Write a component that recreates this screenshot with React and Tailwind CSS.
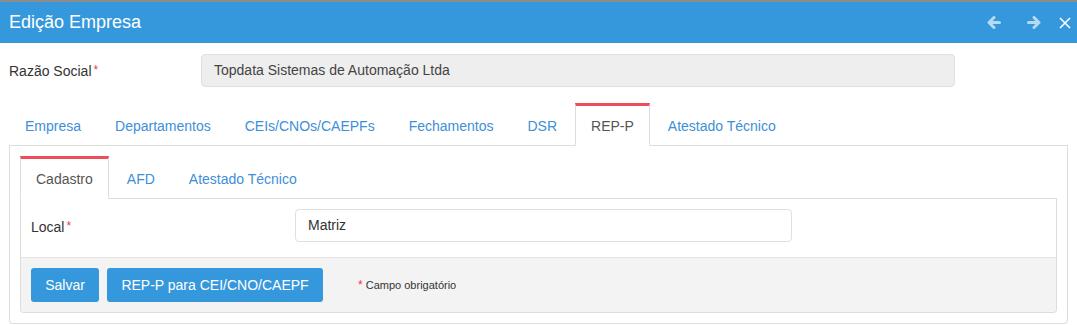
import React, { useState } from 'react';

const outerTabs = ['Empresa', 'Departamentos', 'CEIs/CNOs/CAEPFs', 'Fechamentos', 'DSR', 'REP-P', 'Atestado Técnico'];
const innerTabs = ['Cadastro', 'AFD', 'Atestado Técnico'];

const Required = () => <span className="text-[#e73d4a] text-[12px] relative -top-[2px] ml-[2px]">*</span>;

const Tab = ({ label, active, onClick }) => (
  <li className="mr-[2px] -mb-px">
    <button
      onClick={onClick}
      className={
        active
          ? 'block h-[43px] px-[15px] border border-[#ddd] border-b-white border-t-[3px] border-t-[#ed4e59] bg-white text-[#555] leading-[20px] text-[14px]'
          : 'block h-[43px] px-[15px] border border-transparent border-t-[3px] text-[#3d8fd8] leading-[20px] text-[14px]'
      }
    >
      {label}
    </button>
  </li>
);

const ArrowIcon = ({ dir }) => (
  <svg width="14" height="13" viewBox="0 0 14 13" className={dir === 'right' ? 'rotate-180' : ''}>
    <path d="M7 1.5 L2 6.5 L7 11.5 M2.5 6.5 H12.5" fill="none" stroke="#b8d9f3" strokeWidth="3" strokeLinecap="round" strokeLinejoin="round" />
  </svg>
);

export default function App() {
  const [tab, setTab] = useState('REP-P');
  const [inner, setInner] = useState('Cadastro');

  return (
    <div className="w-full bg-white text-[14px] text-[#333]" style={{ fontFamily: '"Liberation Sans", Arial, sans-serif' }}>
      <div className="h-[2px] bg-[#8c8c8c]" />
      <div className="h-[41px] bg-[#3598dc] flex items-center justify-between pl-[9px] pr-[6px]">
        <h1 className="text-white text-[18px]">Edição Empresa</h1>
        <div className="flex items-center">
          <ArrowIcon dir="left" />
          <span className="w-[26px]" />
          <ArrowIcon dir="right" />
          <span className="w-[18px]" />
          <svg width="12" height="12" viewBox="0 0 12 12">
            <path d="M1 1 L11 11 M11 1 L1 11" stroke="#fff" strokeWidth="1.6" />
          </svg>
        </div>
      </div>

      {/* Razão social */}
      <div className="flex items-center px-[9px] mt-[11px]">
        <label className="w-[192px] pt-[2px]">
          Razão Social<Required />
        </label>
        <div className="w-[754px] h-[33px] flex items-center px-[12px] bg-[#eee] border border-[#e0e0e0] rounded-[4px] text-[#444]">
          Topdata Sistemas de Automação Ltda
        </div>
      </div>

      {/* Outer tabs */}
      <div className="px-[9px] mt-[16px]">
        <ul className="flex border-b border-[#ddd]">
          {outerTabs.map((t) => (
            <Tab key={t} label={t} active={t === tab} onClick={() => setTab(t)} />
          ))}
        </ul>
        <div className="border border-t-0 border-[#ddd] rounded-b-[4px] p-[10px]">
          <ul className="flex border-b border-[#ddd]">
            {innerTabs.map((t) => (
              <Tab key={t} label={t} active={t === inner} onClick={() => setInner(t)} />
            ))}
          </ul>
          <div className="border border-t-0 border-[#ddd] rounded-b-[4px]">
            <div className="flex items-center pl-[10px] pt-[10px] pb-[15px]">
              <label className="w-[264px] pt-[4px]">
                Local<Required />
              </label>
              <div className="w-[497px] h-[33px] flex items-center px-[12px] bg-white border border-[#e0e0e0] rounded-[4px] text-[#333]">
                Matriz
              </div>
            </div>
            <div className="flex items-center bg-[#f3f3f3] border-t border-[#e4e4e4] px-[10px] py-[10px] rounded-b-[4px]">
              <button className="h-[34px] w-[68px] rounded-[3px] bg-[#3598dc] text-white">Salvar</button>
              <button className="h-[34px] w-[216px] ml-[8px] rounded-[3px] bg-[#3598dc] text-white">REP-P para CEI/CNO/CAEPF</button>
              <span className="ml-[35px] text-[11px] text-[#333]">
                <span className="text-[#e73d4a] text-[12px]">*</span> Campo obrigatório
              </span>
            </div>
          </div>
        </div>
      </div>
    </div>
  );
}
